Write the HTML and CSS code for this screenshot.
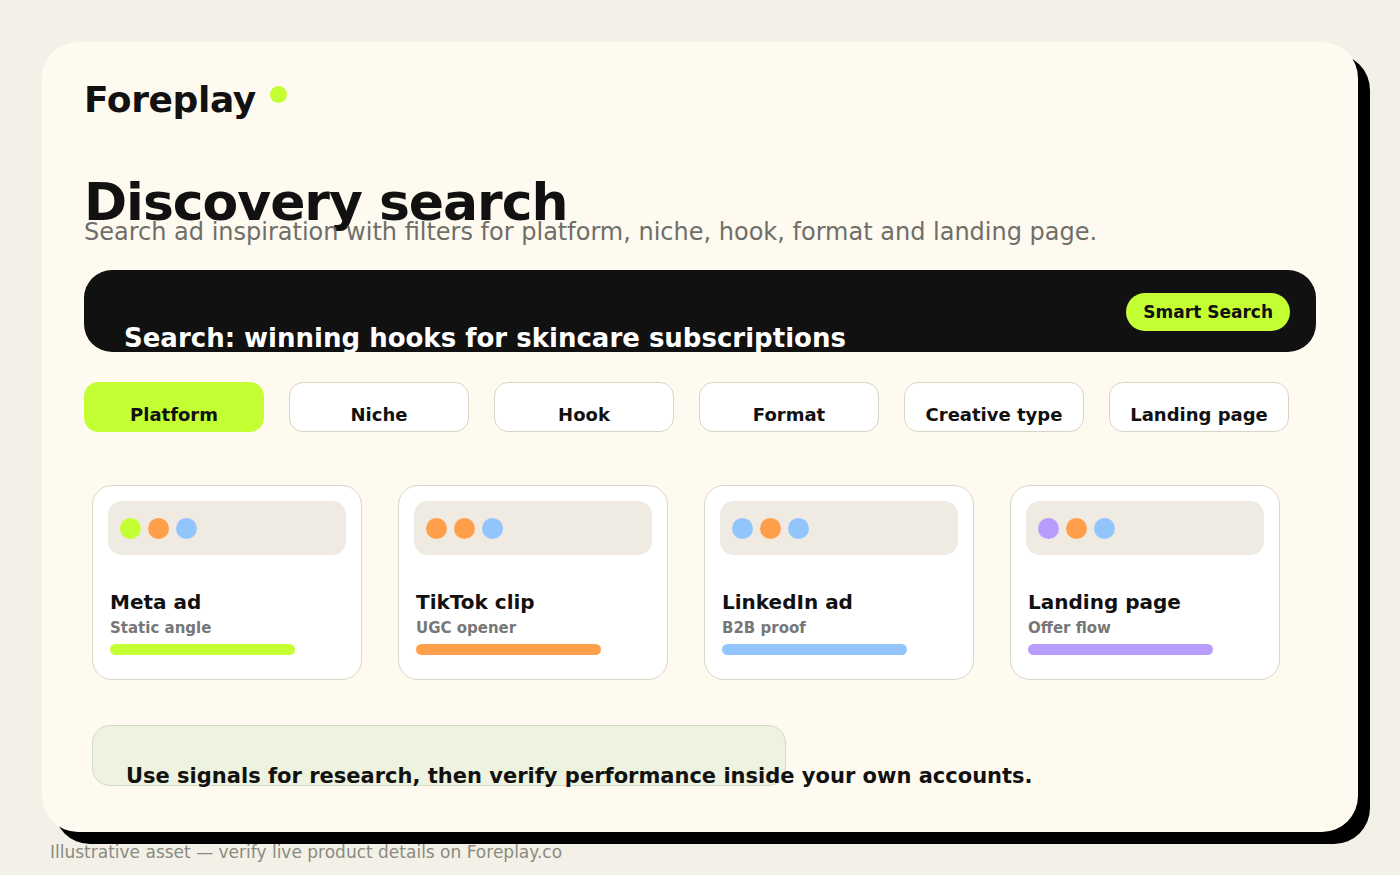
FILE: index.html
```html
<!DOCTYPE html>
<html lang="en">
<head>
    <meta charset="UTF-8">
    <meta name="viewport" content="width=device-width, initial-scale=1.0">
    <title>Foreplay - Discovery search</title>
    <link rel="stylesheet" href="styles.css">
</head>
<body>
    <div class="frame">
        <div class="brand">
            <span class="brand-name">Foreplay</span>
            <span class="brand-dot"></span>
        </div>
        <h1 class="title">Discovery search</h1>
        <p class="subtitle">Search ad inspiration with filters for platform, niche, hook, format and landing page.</p>

        <div class="search-bar">
            <div class="search-text">Search: winning hooks for skincare subscriptions</div>
            <div class="smart-btn">Smart Search</div>
        </div>

        <div class="tabs">
            <div class="tab active">Platform</div>
            <div class="tab">Niche</div>
            <div class="tab">Hook</div>
            <div class="tab">Format</div>
            <div class="tab">Creative type</div>
            <div class="tab">Landing page</div>
        </div>

        <div class="cards">
            <div class="card">
                <div class="card-top">
                    <span class="dot lime"></span>
                    <span class="dot orange"></span>
                    <span class="dot blue"></span>
                </div>
                <div class="card-body">
                    <div class="card-title">Meta ad</div>
                    <div class="card-sub">Static angle</div>
                    <div class="bar lime"></div>
                </div>
            </div>
            <div class="card">
                <div class="card-top">
                    <span class="dot orange"></span>
                    <span class="dot orange"></span>
                    <span class="dot blue"></span>
                </div>
                <div class="card-body">
                    <div class="card-title">TikTok clip</div>
                    <div class="card-sub">UGC opener</div>
                    <div class="bar orange"></div>
                </div>
            </div>
            <div class="card">
                <div class="card-top">
                    <span class="dot blue"></span>
                    <span class="dot orange"></span>
                    <span class="dot blue"></span>
                </div>
                <div class="card-body">
                    <div class="card-title">LinkedIn ad</div>
                    <div class="card-sub">B2B proof</div>
                    <div class="bar blue"></div>
                </div>
            </div>
            <div class="card">
                <div class="card-top">
                    <span class="dot purple"></span>
                    <span class="dot orange"></span>
                    <span class="dot blue"></span>
                </div>
                <div class="card-body">
                    <div class="card-title">Landing page</div>
                    <div class="card-sub">Offer flow</div>
                    <div class="bar purple"></div>
                </div>
            </div>
        </div>

        <div class="note">
            <div class="note-text">Use signals for research, then verify performance inside your own accounts.</div>
        </div>
    </div>
    <div class="footer">Illustrative asset — verify live product details on Foreplay.co</div>
</body>
</html>
```

FILE: styles.css
```css
* {
    box-sizing: border-box;
}
body {
    margin: 0;
    padding: 42px 42px 0;
    background: #f3f1e7;
    color: #111;
    font-family: "DejaVu Sans", Verdana, sans-serif;
}
.frame {
    height: 790px;
    background: #fffaef;
    border-radius: 36px;
    box-shadow: 12px 12px 0 #000;
    padding: 38px 42px 0;
}
.brand {
    display: flex;
    align-items: flex-start;
    gap: 14px;
}
.brand-name {
    font-size: 36px;
    line-height: 40px;
    font-weight: bold;
    letter-spacing: -0.01em;
}
.brand-dot {
    width: 17px;
    height: 17px;
    margin-top: 6px;
    border-radius: 50%;
    background: #c3ff32;
}
.title {
    margin: 56px 0 0;
    font-size: 52px;
    line-height: 52px;
    letter-spacing: -0.02em;
}
.subtitle {
    margin: -10px 0 0;
    font-size: 24px;
    color: #6e6e6a;
}
.search-bar {
    margin-top: 24px;
    height: 82px;
    background: #111;
    border-radius: 28px;
    padding: 23px 26px 0 40px;
    display: flex;
    justify-content: space-between;
    align-items: flex-end;
}
.search-text {
    color: #fff;
    font-size: 26px;
    line-height: 30px;
    font-weight: bold;
    margin-bottom: -1px;
    white-space: nowrap;
}
.smart-btn {
    align-self: flex-start;
    height: 38px;
    padding: 0 17px;
    border-radius: 19px;
    background: #c3ff32;
    color: #111;
    font-size: 17px;
    font-weight: bold;
    line-height: 38px;
}
.tabs {
    margin-top: 30px;
    display: grid;
    grid-template-columns: repeat(6, 180px);
    gap: 25px;
}
.tab {
    height: 50px;
    padding-top: 21px;
    border: 1px solid #d9d4c6;
    border-radius: 14px;
    background: #fff;
    text-align: center;
    font-size: 18px;
    font-weight: bold;
}
.tab.active {
    background: #c3ff32;
    border-color: #c3ff32;
}
.cards {
    margin-top: 53px;
    padding: 0 8px;
    display: flex;
    gap: 36px;
}
.card {
    width: 270px;
    height: 195px;
    border: 1px solid #dbd6ca;
    border-radius: 20px;
    background: #fff;
    padding: 15px;
}
.card-top {
    height: 54px;
    border-radius: 14px;
    background: #efebe3;
    display: flex;
    align-items: center;
    gap: 7px;
    padding-left: 12px;
}
.dot {
    width: 21px;
    height: 21px;
    border-radius: 50%;
}
.card-body {
    padding: 0 2px;
}
.card-title {
    margin-top: 35px;
    font-size: 20px;
    font-weight: bold;
}
.card-sub {
    margin-top: 5px;
    font-size: 15px;
    font-weight: bold;
    color: #777;
}
.bar {
    margin-top: 7px;
    width: 185px;
    height: 11px;
    border-radius: 6px;
}
.lime { background: #c3ff32; }
.orange { background: #ff9f4a; }
.blue { background: #93c5fd; }
.purple { background: #b89cfc; }
.note {
    margin: 45px 0 0 8px;
    width: 694px;
    height: 61px;
    border: 1px solid #d5d9c3;
    border-radius: 18px;
    background: #eef3df;
    padding-left: 33px;
    display: flex;
    align-items: flex-end;
}
.note-text {
    font-size: 21px;
    font-weight: bold;
    white-space: nowrap;
    margin-bottom: -3px;
}
.footer {
    margin-top: 10px;
    padding-left: 8px;
    font-size: 17px;
    color: #8a8a80;
}
```
